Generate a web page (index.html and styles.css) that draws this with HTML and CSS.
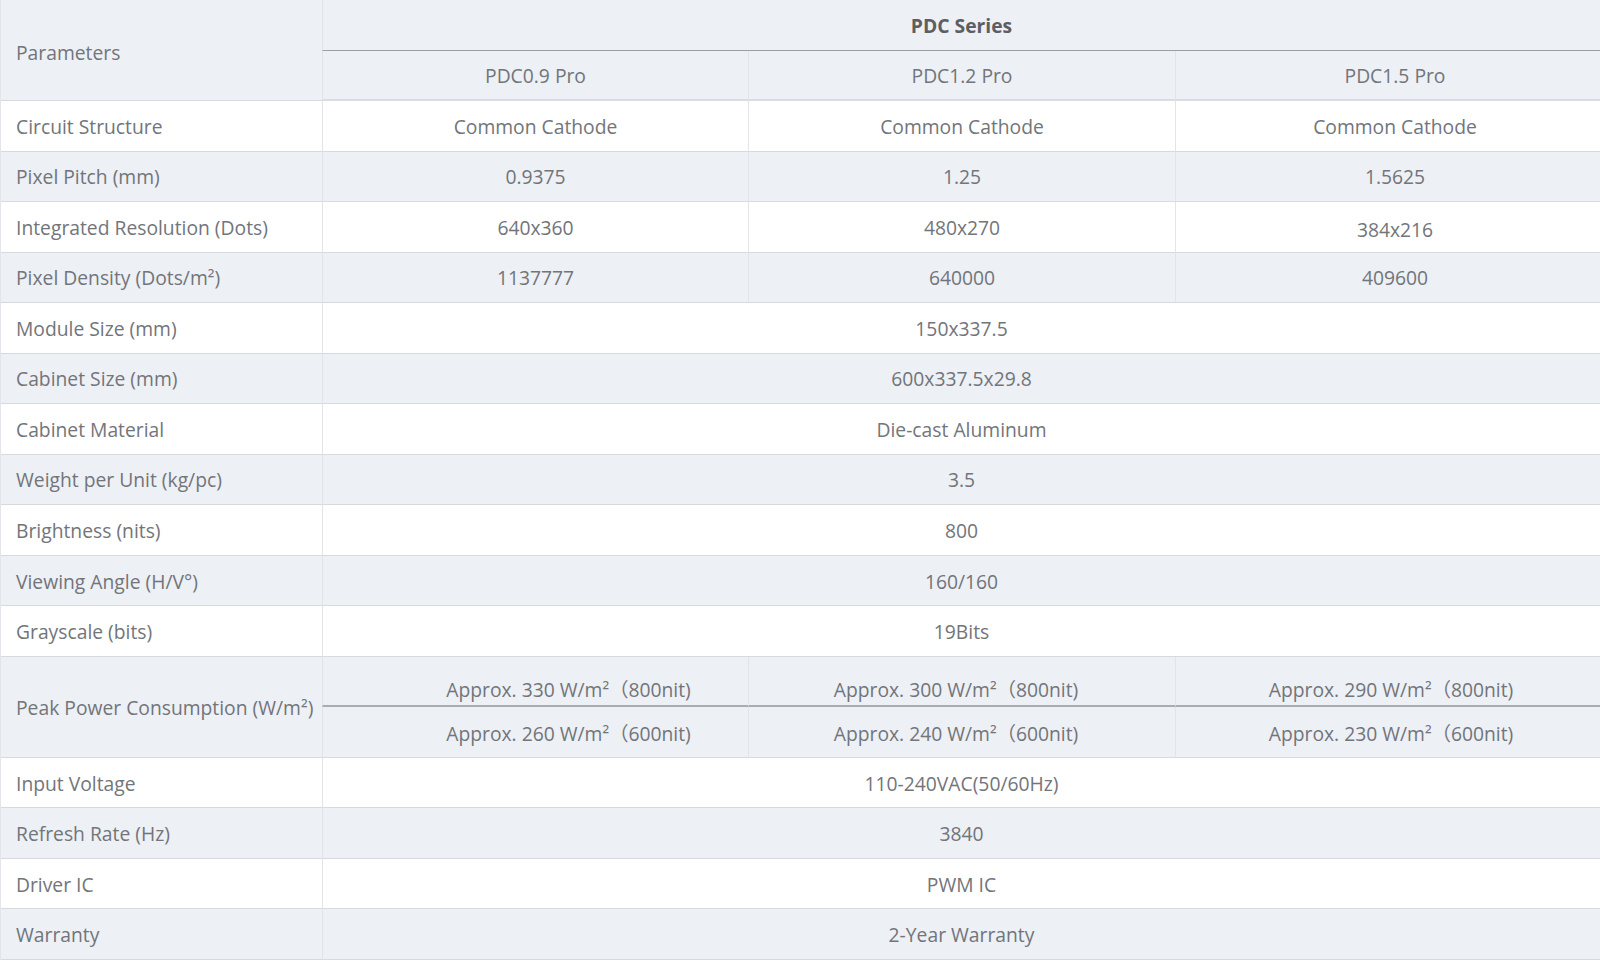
FILE: index.html
```html
<!DOCTYPE html>
<html lang="en">
<head>
<meta charset="utf-8">
<title>PDC Series Parameters</title>
<link rel="stylesheet" href="styles.css">
</head>
<body>
<div class="spec">
  <div class="c lab hd r2 phd">Parameters</div>
  <div class="c ctr hd series s3">PDC Series</div>
  <div class="c ctr hd sub">PDC0.9 Pro</div>
  <div class="c ctr hd sub">PDC1.2 Pro</div>
  <div class="c ctr hd sub last">PDC1.5 Pro</div>

  <div class="c lab">Circuit Structure</div>
  <div class="c ctr">Common Cathode</div>
  <div class="c ctr">Common Cathode</div>
  <div class="c ctr last">Common Cathode</div>

  <div class="c lab g">Pixel Pitch (mm)</div>
  <div class="c ctr g">0.9375</div>
  <div class="c ctr g">1.25</div>
  <div class="c ctr g last">1.5625</div>

  <div class="c lab">Integrated Resolution (Dots)</div>
  <div class="c ctr">640x360</div>
  <div class="c ctr">480x270</div>
  <div class="c ctr last low">384x216</div>

  <div class="c lab g">Pixel Density (Dots/m²)</div>
  <div class="c ctr g">1137777</div>
  <div class="c ctr g">640000</div>
  <div class="c ctr g last">409600</div>

  <div class="c lab">Module Size (mm)</div>
  <div class="c ctr s3">150x337.5</div>

  <div class="c lab g">Cabinet Size (mm)</div>
  <div class="c ctr g s3">600x337.5x29.8</div>

  <div class="c lab">Cabinet Material</div>
  <div class="c ctr s3">Die-cast Aluminum</div>

  <div class="c lab g">Weight per Unit (kg/pc)</div>
  <div class="c ctr g s3">3.5</div>

  <div class="c lab">Brightness (nits)</div>
  <div class="c ctr s3">800</div>

  <div class="c lab g">Viewing Angle (H/V°)</div>
  <div class="c ctr g s3">160/160</div>

  <div class="c lab">Grayscale (bits)</div>
  <div class="c ctr s3">19Bits</div>

  <div class="c lab g r2">Peak Power Consumption (W/m²)</div>
  <div class="c ctr g split pw1">Approx. 330 W/m²（800nit)</div>
  <div class="c ctr g split pw2">Approx. 300 W/m²（800nit)</div>
  <div class="c ctr g split pw3">Approx. 290 W/m²（800nit)</div>
  <div class="c ctr g pw1">Approx. 260 W/m²（600nit)</div>
  <div class="c ctr g pw2">Approx. 240 W/m²（600nit)</div>
  <div class="c ctr g pw3">Approx. 230 W/m²（600nit)</div>

  <div class="c lab">Input Voltage</div>
  <div class="c ctr s3">110-240VAC(50/60Hz)</div>

  <div class="c lab g">Refresh Rate (Hz)</div>
  <div class="c ctr g s3">3840</div>

  <div class="c lab">Driver IC</div>
  <div class="c ctr s3">PWM IC</div>

  <div class="c lab g">Warranty</div>
  <div class="c ctr g s3">2-Year Warranty</div>
</div>
</body>
</html>
```

FILE: styles.css
```css
html, body {
  margin: 0;
  padding: 0;
  background: #ffffff;
}

.spec {
  display: grid;
  grid-template-columns: 321px 426px 427px 1fr;
  grid-template-rows: repeat(19, 1fr);
  width: 1600px;
  height: 960px;
  font-family: "Open Sans", "Noto Sans", "Noto Sans CJK SC", sans-serif;
  font-size: 19.3px;
  color: #72757a;
  border-left: 1px solid #e2e5ea;
  box-sizing: border-box;
}

.c {
  display: flex;
  align-items: center;
  padding-top: 1px;
  background: #ffffff;
  border-bottom: 1px solid #d6d9de;
  box-sizing: border-box;
  white-space: nowrap;
  min-width: 0;
}

.c + .ctr {
  border-left: 1px solid #e1e4e9;
}

.lab {
  padding-left: 15px;
}

.ctr {
  justify-content: center;
}

.last {
  padding-left: 14px;
}

.low {
  padding-top: 5px;
}

.phd {
  padding-top: 5px;
}

.pw1 {
  padding-left: 66px;
}

.pw2 {
  padding-right: 12px;
}

.pw3 {
  padding-left: 6px;
}

.g,
.hd {
  background: #edf0f5;
}

.r2 {
  grid-row: span 2;
}

.s3 {
  grid-column: span 3;
}

.series {
  font-weight: 700;
  color: #5b5e63;
  border-bottom: 1px solid #9a9ea5;
}

.sub {
  border-bottom: 2px solid #d9dce1;
}

.split {
  padding-top: 15px;
  border-bottom: 2px solid #a9adb3;
}
```
